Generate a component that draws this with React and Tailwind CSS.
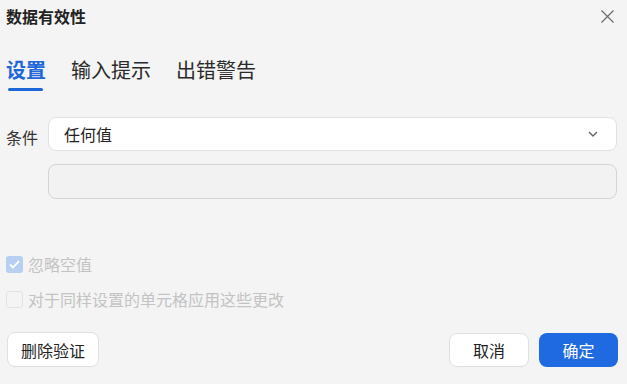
import React from "react";

const TABS = ["设置", "输入提示", "出错警告"];

export default function App() {
  return (
    <div
      className="w-[627px] h-[384px] bg-[#f4f4f4] text-[#222] flex flex-col overflow-hidden"
      style={{ fontFamily: '"Noto Sans CJK SC", "Noto Sans", sans-serif' }}
    >
      {/* header */}
      <div className="h-8 flex items-center justify-between pl-[6px] pr-[13px]">
        <span className="text-[16px] font-bold leading-none text-[#222]">数据有效性</span>
        <svg width="13" height="13" viewBox="0 0 13 13" className="text-[#6b6b6b]">
          <path d="M0.5 0.5 L12.5 12.5 M12.5 0.5 L0.5 12.5" stroke="currentColor" strokeWidth="1.2" fill="none" />
        </svg>
      </div>

      {/* tabs */}
      <div className="mt-6 flex gap-[25px] pl-[6px]">
        {TABS.map((t, i) => (
          <div key={t} className="flex flex-col">
            <span
              className={
                i === 0
                  ? "text-[20px] leading-[28px] font-bold text-[#1f66d8]"
                  : "text-[20px] leading-[28px] text-[#2a2a2a]"
              }
            >
              {t}
            </span>
            {i === 0 && <span className="mt-1 ml-[2px] h-[3px] w-[35px] rounded-full bg-[#1f66d8]" />}
          </div>
        ))}
      </div>

      {/* condition */}
      <div className="mt-[26px] flex pl-[6px] pr-[10px]">
        <span className="w-[42px] pt-[9px] text-[16px] leading-[22px] text-[#333]">条件</span>
        <div className="flex-1 flex flex-col gap-[13px]">
          <div className="h-[34px] rounded-[8px] border border-[#e2e2e2] bg-white flex items-center justify-between pl-[15px] pr-[18px]">
            <span className="text-[16px] text-[#222]">任何值</span>
            <svg width="10" height="6" viewBox="0 0 10 6" className="text-[#666]">
              <path d="M1 1 L5 5 L9 1" stroke="currentColor" strokeWidth="1.4" fill="none" />
            </svg>
          </div>
          <div className="h-[35px] rounded-[8px] border border-[#d4d4d4] bg-[#f2f2f2]" />
        </div>
      </div>

      {/* options */}
      <div className="mt-[57px] flex flex-col gap-[18px] pl-[6px]">
        <label className="flex items-center gap-[5px] text-[16px] leading-[17px] text-[#c3c3c3]">
          <span className="w-[17px] h-[17px] rounded-[3px] bg-[#b7cff3] flex items-center justify-center">
            <svg width="11" height="9" viewBox="0 0 11 9">
              <path d="M1 4.5 L4 7.5 L10 1.2" stroke="white" strokeWidth="1.8" fill="none" />
            </svg>
          </span>
          忽略空值
        </label>
        <label className="flex items-center gap-[5px] text-[16px] leading-[17px] text-[#c3c3c3]">
          <span className="w-[17px] h-[17px] rounded-[3px] border border-[#e2e2e2] bg-[#f4f4f4]" />
          对于同样设置的单元格应用这些更改
        </label>
      </div>

      {/* footer */}
      <div className="mt-[24px] flex items-center pl-[7px] pr-[9px]">
        <button className="h-[35px] w-[92px] rounded-[8px] border border-[#e0e0e0] bg-white text-[16px] text-[#222]">
          删除验证
        </button>
        <div className="ml-auto flex gap-[10px]">
          <button className="h-[34px] w-[80px] rounded-[8px] border border-[#e0e0e0] bg-white text-[16px] text-[#222]">
            取消
          </button>
          <button className="h-[34px] w-[79px] rounded-[8px] bg-[#1f6ae0] text-[16px] text-white">
            确定
          </button>
        </div>
      </div>
    </div>
  );
}
